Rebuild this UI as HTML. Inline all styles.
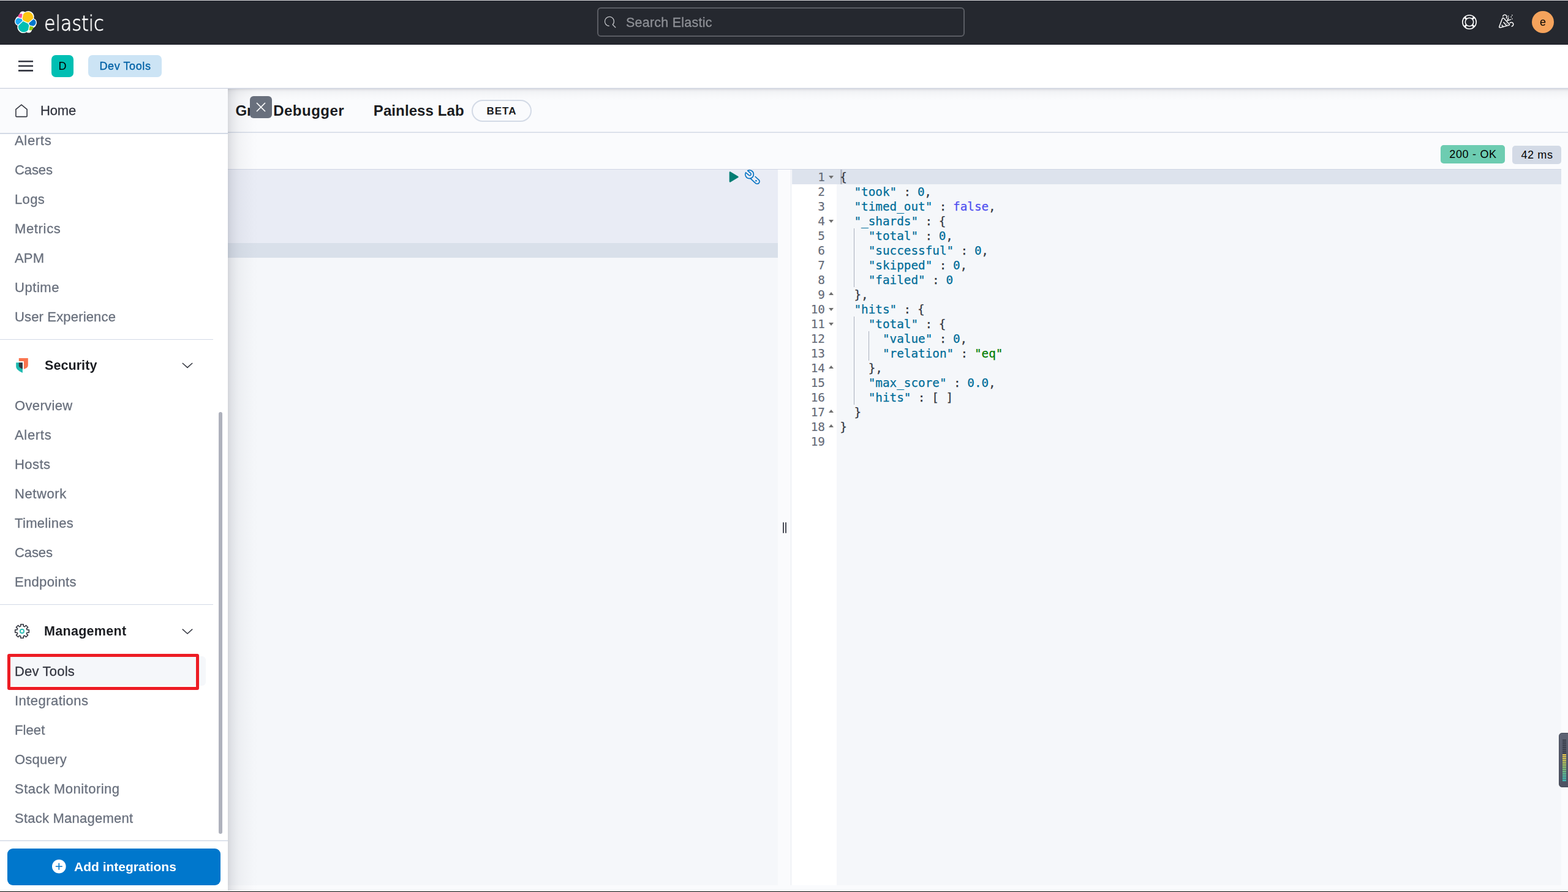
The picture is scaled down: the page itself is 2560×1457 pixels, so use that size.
<!DOCTYPE html>
<html lang="en">
<head>
<meta charset="utf-8">
<title>Dev Tools - Elastic</title>
<style>
*{box-sizing:border-box;margin:0;padding:0}
html,body{width:2560px;height:1457px;overflow:hidden;background:#fafbfd}
body{font-family:"Liberation Sans",sans-serif;color:#343741;position:relative}
.abs{position:absolute}
/* top header */
#topline{left:0;top:0;width:2560px;height:2px;background:linear-gradient(#e0e0e0 50%,#1c1f29 50%)}
#hdr{left:0;top:1px;width:2560px;height:72px;background:#25282f;border-bottom:1px solid #171a24}
#wordmark{left:72px;top:15px;font-family:"DejaVu Sans Light","DejaVu Sans",sans-serif;font-weight:200;font-size:33.3px;line-height:48px;color:#fff;-webkit-text-stroke:.8px #fff;transform-origin:0 50%;transform:scaleX(.903);white-space:nowrap}
#search{left:975px;top:12px;width:600px;height:48px;border:2px solid #5a5c63;border-radius:6px}
#search span{position:absolute;left:45px;top:1px;line-height:44px;font-size:21.5px;color:#8e9096;white-space:nowrap;letter-spacing:.23px;-webkit-text-stroke-width:.3px}
#avatar{left:2501px;top:18px;width:36px;height:36px;border-radius:50%;background:#f5a35c;color:#000;font-size:18px;line-height:36px;text-align:center}
/* second header */
#hdr2{left:0;top:72px;width:2560px;height:72px;background:#fff}
#hdr2b{left:0;top:143px;width:2560px;height:2px;background:linear-gradient(#eef0f5 50%,#cdd2df 50%)}
#hdrshadow{left:372px;top:145px;width:2188px;height:20px;background:linear-gradient(180deg,rgba(60,64,80,.168) 0,rgba(60,64,80,.126) 1.5px,rgba(60,64,80,.09) 2.5px,rgba(60,64,80,.068) 3.5px,rgba(60,64,80,.053) 4.5px,rgba(60,64,80,.042) 5.5px,rgba(60,64,80,.03) 8px,rgba(60,64,80,.015) 12px,rgba(60,64,80,0) 20px)}
#space{left:84px;top:90px;width:36px;height:36px;border-radius:7px;background:#00bfb3;color:#000;font-size:18px;line-height:36px;text-align:center}
#crumb{left:144px;top:90px;width:120px;height:36px;border-radius:7px;background:#cce4f5;color:#0061a6;font-size:18px;line-height:36px;text-align:center;white-space:nowrap;letter-spacing:.6px;padding-left:1px;-webkit-text-stroke-width:.35px}

/* nav */
#nav{left:0;top:145px;width:372px;height:1312px;background:#fff}
#navshadow{left:372px;top:145px;width:56px;height:1312px;background:linear-gradient(90deg,rgba(60,64,80,.19) 0,rgba(60,64,80,.157) 2px,rgba(60,64,80,.113) 6px,rgba(60,64,80,.076) 12.5px,rgba(60,64,80,.049) 18px,rgba(60,64,80,.027) 28px,rgba(60,64,80,.005) 43px,rgba(60,64,80,0) 52px)}
#navhome{left:0;top:145px;width:372px;height:72px;background:#fafbfd}
#navhomeb{left:0;top:217px;width:372px;height:2px;background:#d3dae6}
.ni{position:absolute;left:24px;font-size:22px;line-height:24px;height:24px;color:#69707d;white-space:nowrap;-webkit-text-stroke-width:.3px}
.nh{position:absolute;left:72px;font-size:21.5px;line-height:24px;height:24px;color:#1a1c21;font-weight:700;white-space:nowrap}
.ni,.nh,#addbtn span,#crumb,#space,#avatar,#search span,#wordmark{will-change:transform}
.nd{position:absolute;left:0;width:348px;height:1px;background:#d3dae6}
#home{left:66px;top:169px;color:#343741;letter-spacing:-.15px}
#sel{left:12px;top:1072px;width:324px;height:48px;border-radius:6px;background:#f5f7fa}
#redbox{left:12px;top:1068px;width:313px;height:59px;border:5px solid #ed1c24;border-radius:3px}
#thumb{left:357px;top:673px;width:6px;height:689px;border-radius:3px;background:#aeb1bc}
#navfootb{left:0;top:1372px;width:372px;height:2px;background:linear-gradient(#e9ecf2 50%,#d3dae6 50%)}
#addbtn{left:12px;top:1386px;width:348px;height:60px;border-radius:9px;background:#0077cc;color:#fff;font-size:21px;font-weight:700;line-height:60px;white-space:nowrap}
#addbtn span{position:absolute;left:109px;top:0}
#bottomline{left:0;top:1455px;width:2560px;height:2px;background:linear-gradient(#fff 50%,#000 50%)}

/* main */
#main{left:372px;top:145px;width:2188px;height:1312px;background:#fafbfd}
#tabsb{left:372px;top:215px;width:2188px;height:2px;background:linear-gradient(#e6eaf1 50%,#d3dae6 50%)}
#toolb{left:372px;top:275px;width:2177px;height:2px;background:linear-gradient(#fdfdfe 50%,#d0d6e4 50%)}
.tab{position:absolute;top:167px;font-size:24px;line-height:28px;font-weight:700;color:#1a1c21;white-space:nowrap}
#beta{left:770px;top:163px;width:98px;height:36px;border:2px solid #d3dae6;border-radius:18px;font-size:17px;font-weight:700;line-height:34px;text-align:center;color:#1a1c21;letter-spacing:1px;background:#fafbfd}
#closeb{left:408px;top:157px;width:36px;height:36px;border-radius:6px;background:#69707d}
#b200{left:2352px;top:237px;width:105px;height:30px;border-radius:5px;background:#6dccb1;color:#000;font-size:18px;line-height:30px;text-align:center;white-space:nowrap;letter-spacing:.7px;padding-left:1px}
#b42{left:2469px;top:238px;width:80px;height:30px;border-radius:5px;background:#d3dae6;color:#000;font-size:18px;line-height:30px;text-align:center;white-space:nowrap;letter-spacing:.6px;padding-left:1px}
#led{left:372px;top:277px;width:898px;height:1169px;background:#f5f7fa}
#lreq{left:372px;top:277px;width:898px;height:120px;background:#e9ecf5}
#lact{left:372px;top:397px;width:898px;height:24px;background:#d9e0ea}
#rsz{left:1270px;top:277px;width:21px;height:1169px;background:#fafbfd}
#rszb{left:1291px;top:277px;width:1px;height:1169px;background:#e6e9f0}
#gut{left:1292px;top:277px;width:74px;height:1169px;background:#fff}
#red{left:1366px;top:277px;width:1183px;height:1169px;background:#f5f7fa}
#ract{left:1293px;top:277px;width:1256px;height:24px;background:#dde3ed}
#cursor{left:1372px;top:277px;width:3px;height:24px;background:#b3b8c5}
.hb{position:absolute;top:853px;width:2px;height:18px;background:#4a4d58;border-radius:1px}
pre{font-family:"DejaVu Sans Mono","Liberation Mono",monospace;font-size:19.32px;line-height:24px}
#lnum{left:1292px;top:278px;width:55px;text-align:right;color:#646a77;-webkit-text-stroke-width:.15px}
#code{left:1371.2px;top:278px;color:#343741;-webkit-text-stroke-width:.25px}
#code .k{color:#006d99}
#code .n{color:#006d99}
#code .b{color:#4f4ff0}
#code .c1{letter-spacing:-.3px}
#code .c2{letter-spacing:-.9px}
#code .cm{margin-left:-.25px}
#code .s{color:#017d00}
.fo,.fc{position:absolute;left:1353px;width:0;height:0;border-left:4.5px solid transparent;border-right:4.5px solid transparent}
.fo{border-top:5px solid #707070}
.fc{border-bottom:5px solid #707070}
.ig{position:absolute;width:1px;background:#aab0bd}
</style>
</head>
<body>
<div class="abs" id="main"></div>
<div class="abs" id="tabsb"></div>
<div class="tab" id="tab1" style="left:384.5px"><span style="letter-spacing:-.2px">Grok </span><span style="letter-spacing:.5px">Debugger</span></div>
<div class="tab" id="tab2" style="left:609.8px;letter-spacing:.1px">Painless Lab</div>
<div class="abs" id="beta">BETA</div>
<div class="abs" id="closeb"><svg width="36" height="36" viewBox="0 0 36 36"><path d="M11 11 L25 25 M25 11 L11 25" stroke="#fff" stroke-width="1.7" fill="none"/></svg></div>
<div class="abs" id="toolb"></div>
<div class="abs" id="b200">200 - OK</div>
<div class="abs" id="b42">42 ms</div>
<div class="abs" id="led"></div><div class="abs" id="lreq"></div><div class="abs" id="lact"></div>
<div class="abs" id="rsz"></div><div class="abs" id="rszb"></div>
<div class="hb" style="left:1278px"></div><div class="hb" style="left:1282px"></div>
<div class="abs" id="gut"></div><div class="abs" id="red"></div><div class="abs" id="ract"></div>
<div class="abs" id="cursor"></div>
<pre class="abs" id="lnum">1
2
3
4
5
6
7
8
9
10
11
12
13
14
15
16
17
18
19</pre>
<div class="fo" style="top:287px"></div><div class="fo" style="top:359px"></div><div class="fo" style="top:503px"></div><div class="fo" style="top:527px"></div><div class="fc" style="top:477px"></div><div class="fc" style="top:597px"></div><div class="fc" style="top:669px"></div><div class="fc" style="top:693px"></div>
<div class="ig" style="left:1394px;top:373px;height:96px"></div><div class="ig" style="left:1394px;top:517px;height:144px"></div><div class="ig" style="left:1418px;top:541px;height:48px"></div>
<pre class="abs" id="code">{
  <span class="k">"took"</span><span class="c1"> </span>:<span class="c2"> </span><span class="n">0</span><span class="cm">,</span>
  <span class="k">"timed_out"</span><span class="c1"> </span>:<span class="c2"> </span><span class="b">false</span><span class="cm">,</span>
  <span class="k">"_shards"</span><span class="c1"> </span>:<span class="c2"> </span>{
    <span class="k">"total"</span><span class="c1"> </span>:<span class="c2"> </span><span class="n">0</span><span class="cm">,</span>
    <span class="k">"successful"</span><span class="c1"> </span>:<span class="c2"> </span><span class="n">0</span><span class="cm">,</span>
    <span class="k">"skipped"</span><span class="c1"> </span>:<span class="c2"> </span><span class="n">0</span><span class="cm">,</span>
    <span class="k">"failed"</span><span class="c1"> </span>:<span class="c2"> </span><span class="n">0</span>
  },
  <span class="k">"hits"</span><span class="c1"> </span>:<span class="c2"> </span>{
    <span class="k">"total"</span><span class="c1"> </span>:<span class="c2"> </span>{
      <span class="k">"value"</span><span class="c1"> </span>:<span class="c2"> </span><span class="n">0</span><span class="cm">,</span>
      <span class="k">"relation"</span><span class="c1"> </span>:<span class="c2"> </span><span class="s">"eq"</span>
    },
    <span class="k">"max_score"</span><span class="c1"> </span>:<span class="c2"> </span><span class="n">0.0</span><span class="cm">,</span>
    <span class="k">"hits"</span><span class="c1"> </span>:<span class="c2"> </span>[ ]
  }
}
</pre>

<div class="abs" id="hdrshadow"></div>
<div class="abs" id="navshadow"></div>
<div class="abs" id="nav"></div>
<div class="abs" id="navhome"></div><div class="abs" id="navhomeb"></div>
<div class="ni" id="home">Home</div>
<div class="ni" id="n0" style="top:218px;letter-spacing:0.68px">Alerts</div>
<div class="ni" id="n1" style="top:266px;letter-spacing:-0.12px">Cases</div>
<div class="ni" id="n2" style="top:314px;letter-spacing:0.37px">Logs</div>
<div class="ni" id="n3" style="top:362px;letter-spacing:0.65px">Metrics</div>
<div class="ni" id="n4" style="top:410px;letter-spacing:0.20px">APM</div>
<div class="ni" id="n5" style="top:458px;letter-spacing:0.56px">Uptime</div>
<div class="ni" id="n6" style="top:506px;letter-spacing:0.16px">User Experience</div>
<div class="ni" id="n7" style="top:651px;letter-spacing:0.36px">Overview</div>
<div class="ni" id="n8" style="top:699px;letter-spacing:0.68px">Alerts</div>
<div class="ni" id="n9" style="top:747px;letter-spacing:0.43px">Hosts</div>
<div class="ni" id="n10" style="top:795px;letter-spacing:0.58px">Network</div>
<div class="ni" id="n11" style="top:843px;letter-spacing:0.31px">Timelines</div>
<div class="ni" id="n12" style="top:891px;letter-spacing:-0.12px">Cases</div>
<div class="ni" id="n13" style="top:939px;letter-spacing:0.32px">Endpoints</div>
<div class="abs" id="sel"></div>
<div class="ni" id="n14" style="top:1085px;color:#343741;letter-spacing:0.19px">Dev Tools</div>
<div class="ni" id="n15" style="top:1133px;letter-spacing:0.45px">Integrations</div>
<div class="ni" id="n16" style="top:1181px;letter-spacing:0.10px">Fleet</div>
<div class="ni" id="n17" style="top:1229px;letter-spacing:0.25px">Osquery</div>
<div class="ni" id="n18" style="top:1277px;letter-spacing:0.48px">Stack Monitoring</div>
<div class="ni" id="n19" style="top:1325px;letter-spacing:0.23px">Stack Management</div>
<div class="nd" style="top:554px"></div><div class="nd" style="top:987px"></div>
<div class="nh" id="hsec" style="top:585px;left:72.5px;letter-spacing:.07px">Security</div>
<div class="nh" id="hman" style="top:1019px;left:71.5px;letter-spacing:.3px">Management</div>
<div class="abs" id="redbox"></div>
<div class="abs" id="thumb"></div>
<div class="abs" id="navfootb"></div>
<div class="abs" id="addbtn"><span>Add integrations</span></div>
<div class="abs" id="hdr2"></div>
<div class="abs" id="hdr2b"></div>
<div class="abs" id="hdr"></div>
<div class="abs" id="topline"></div>
<div class="abs" id="wordmark">elastic</div>
<div class="abs" id="search"><span>Search Elastic</span></div>
<div class="abs" id="avatar">e</div>
<div class="abs" id="space">D</div>
<div class="abs" id="crumb">Dev Tools</div>
<svg class="abs" id="logo" style="left:24px;top:18px" width="36" height="36" viewBox="0 0 32 32"><g fill="none" fill-rule="evenodd"><path fill="#FFF" d="M32 16.77a6.334 6.334 0 00-1.14-3.63 6.269 6.269 0 00-3.044-2.308 9.159 9.159 0 00-.168-5.165 9.068 9.068 0 00-3.127-4.098A8.951 8.951 0 0019.667.004a8.94 8.94 0 00-4.857 1.56A4.817 4.817 0 0011.763.5a4.82 4.82 0 00-3.057 1.04 4.897 4.897 0 00-1.71 2.771 4.927 4.927 0 00.392 3.238A6.362 6.362 0 001.164 11.5 6.427 6.427 0 000 15.148c-.002 1.305.394 2.58 1.135 3.65a6.297 6.297 0 003.05 2.314 9.16 9.16 0 00.156 5.16 9.073 9.073 0 003.12 4.098 8.956 8.956 0 004.848 1.766 8.942 8.942 0 004.858-1.545 4.814 4.814 0 003.041 1.052 4.817 4.817 0 003.051-1.04 4.894 4.894 0 001.708-2.765 4.925 4.925 0 00-.386-3.232 6.36 6.36 0 006.256-3.946A6.424 6.424 0 0032 16.77"/><path fill="#FEC514" d="M12.58 13.787l7.002 3.211 7.066-6.213a7.849 7.849 0 00.152-1.557c0-1.692-.539-3.34-1.54-4.704a7.897 7.897 0 00-4.02-2.869 7.87 7.87 0 00-4.932.086 7.9 7.9 0 00-3.92 3.007l-1.174 6.118 1.367 2.92-.001.001z"/><path fill="#00BFB3" d="M5.333 21.228a7.964 7.964 0 001.384 6.28 7.935 7.935 0 004.031 2.874 7.912 7.912 0 004.943-.1 7.937 7.937 0 003.923-3.03l1.166-6.102-1.555-2.985-7.03-3.211-6.862 6.274z"/><path fill="#F04E98" d="M5.288 9.067l4.8 1.137L11.14 4.74a3.785 3.785 0 00-4.538-.056 3.81 3.81 0 00-1.314 4.383"/><path fill="#1BA9F5" d="M4.872 10.214a5.294 5.294 0 00-2.595 1.882 5.324 5.324 0 00-.142 6.124 5.287 5.287 0 002.505 2l6.733-6.101-1.235-2.65-5.266-1.255z"/><path fill="#93C90E" d="M20.873 27.277a3.736 3.736 0 002.285.785 3.783 3.783 0 003.101-1.63 3.812 3.812 0 00.451-3.484l-4.8-1.125-1.037 5.454z"/><path fill="#07C" d="M21.848 20.563l5.28 1.238a5.34 5.34 0 002.622-1.938 5.37 5.37 0 001.013-3.106 5.311 5.311 0 00-.936-3.01 5.282 5.282 0 00-2.475-1.944l-6.904 6.07 1.4 2.69z"/></g></svg>
<svg class="abs" style="left:984px;top:24px" width="24" height="24" viewBox="0 0 24 24"><path d="M20.8 20.8 L16.25 16.25 A7.5 7.5 0 1 0 10.3 18.42" fill="none" stroke="#c0c2c6" stroke-width="1.3" stroke-linecap="round" stroke-linejoin="round"/></svg>
<svg class="abs" style="left:2385px;top:22px" width="28" height="28" viewBox="0 0 28 28"><g fill="none" stroke="#fff"><circle cx="14" cy="14" r="11.2" stroke-width="1.6"/><circle cx="14" cy="14" r="6.7" stroke-width="1.6"/><path d="M9.3 9.3 L6.1 6.1 M18.7 9.3 L21.9 6.1 M9.3 18.7 L6.1 21.9 M18.7 18.7 L21.9 21.9" stroke-width="2.9"/></g></svg>
<svg class="abs" style="left:2439px;top:16px" width="40" height="40" viewBox="0 0 40 40"><g fill="none" stroke="#fff" stroke-width="1.5" stroke-linecap="round" stroke-linejoin="round"><path d="M13.7 14.6 Q14.6 12.4 16.2 14 L25 23.2 Q26.4 24.8 24.2 25.4 L10.6 28.9 Q8 29.6 8.9 27.2 Z"/><path d="M15.9 20.5 L20.5 25.7 M13 25 L15.4 27.5"/><path d="M19.8 21.6 L23 25" stroke-width="1" opacity=".6"/><path d="M14.7 10.5 A3.3 3.3 0 1 1 20.3 13.7"/><path d="M26.2 21.4 A3.3 3.3 0 1 1 29.2 27"/><path d="M27.4 15.9 L21.9 17.8 L23.8 13"/></g><g fill="#fff"><circle cx="23.6" cy="10.3" r=".85"/><circle cx="29.8" cy="8.8" r=".85"/><circle cx="28.3" cy="11.7" r=".85"/><circle cx="29.8" cy="14.8" r=".85"/></g></svg>
<svg class="abs" style="left:28px;top:96px" width="28" height="24" viewBox="0 0 28 24"><path d="M2 4.2 H26 M2 11.8 H26 M2 19.4 H26" stroke="#343741" stroke-width="2.6"/></svg>
<svg class="abs" style="left:22px;top:168px" width="26" height="26" viewBox="0 0 26 26"><path d="M13 3.2 L22.1 10.6 V21.4 Q22.1 22.6 20.9 22.6 H5.1 Q3.9 22.6 3.9 21.4 V10.6 Z" fill="none" stroke="#343741" stroke-width="1.6" stroke-linejoin="round"/></svg>
<svg class="abs" style="left:16px;top:576px" width="40" height="40" viewBox="0 0 40 40"><path fill="#fa744e" d="M14.8 9.1 H29.8 V20.6 C29.8 24.4 26.4 26.2 22.9 26.9 V14 H14.8 Z"/><path fill="#1dbab0" d="M10.2 16.2 H20.9 V33 C15.2 30.4 10.2 27.6 10.2 22.6 Z"/><path fill="#343741" d="M14.8 16.2 H20.9 V26.8 C17.6 25.4 14.8 23.8 14.8 21 Z"/></svg>
<svg class="abs" style="left:16px;top:1011px" width="40" height="40" viewBox="0 0 40 40"><path d="M17.80 11.70 L17.80 8.70 L22.20 8.70 L22.20 11.70 A2.60 2.60 0 0 0 24.31 12.58 L26.43 10.45 L29.55 13.57 L27.42 15.69 A2.60 2.60 0 0 0 28.30 17.80 L31.30 17.80 L31.30 22.20 L28.30 22.20 A2.60 2.60 0 0 0 27.42 24.31 L29.55 26.43 L26.43 29.55 L24.31 27.42 A2.60 2.60 0 0 0 22.20 28.30 L22.20 31.30 L17.80 31.30 L17.80 28.30 A2.60 2.60 0 0 0 15.69 27.42 L13.57 29.55 L10.45 26.43 L12.58 24.31 A2.60 2.60 0 0 0 11.70 22.20 L8.70 22.20 L8.70 17.80 L11.70 17.80 A2.60 2.60 0 0 0 12.58 15.69 L10.45 13.57 L13.57 10.45 L15.69 12.58 A2.60 2.60 0 0 0 17.80 11.70 Z" fill="none" stroke="#343741" stroke-width="1.6" stroke-linejoin="round"/><circle cx="20" cy="20" r="3.1" fill="none" stroke="#1dbab0" stroke-width="1.7"/></svg>
<svg class="abs" style="left:294px;top:586px" width="24" height="20" viewBox="0 0 24 20"><path d="M3.8 7 L12 14.4 L20.2 7" fill="none" stroke="#343741" stroke-width="1.5"/></svg>
<svg class="abs" style="left:294px;top:1020px" width="24" height="20" viewBox="0 0 24 20"><path d="M3.8 7.6 L12 15 L20.2 7.6" fill="none" stroke="#343741" stroke-width="1.5"/></svg>
<svg class="abs" style="left:84px;top:1403px" width="25" height="25" viewBox="0 0 25 25"><circle cx="12.3" cy="12.3" r="11.3" fill="#fff"/><path d="M12.3 6.8 V17.8 M6.8 12.3 H17.8" stroke="#0077cc" stroke-width="1.6"/></svg>
<svg class="abs" style="left:1186px;top:276px" width="24" height="26" viewBox="0 0 24 26"><path d="M6 5.6 L18.4 13 L6 20.4 Z" fill="#017d73" stroke="#017d73" stroke-width="2.6" stroke-linejoin="round"/></svg>
<svg class="abs" style="left:1212px;top:273px" width="32" height="32" viewBox="0 0 32 32"><g fill="none" stroke="#0071c2" stroke-width="1.6" stroke-linecap="round" stroke-linejoin="round"><path d="M8.6 5.7 A6.8 6.8 0 1 1 5.5 8.75 L10.6 13.2 A2.2 2.2 0 0 0 13.2 9.6 Z"/><path d="M13.6 18.8 L21.1 25.8 A3.85 3.85 0 0 0 27.2 21.1 L21.1 15.5"/><circle cx="22.4" cy="22.3" r="1.25" fill="#0071c2" stroke="none"/></g></svg>
<div class="abs" id="widget" style="left:2545px;top:1197px;width:20px;height:89px;border-radius:5px;background:linear-gradient(180deg,#5d6373,#4d5262);border:1px solid #464b59"><div style="position:absolute;left:5px;top:10px;width:6px;height:2px;background:#3a3f4b"></div><div style="position:absolute;left:5px;top:13px;width:6px;height:2px;background:#3a3f4b"></div><div style="position:absolute;left:5px;top:16px;width:6px;height:2px;background:#3a3f4b"></div><div style="position:absolute;left:5px;top:19px;width:6px;height:2px;background:#3a3f4b"></div><div style="position:absolute;left:5px;top:22px;width:6px;height:2px;background:#3a3f4b"></div><div style="position:absolute;left:5px;top:25px;width:6px;height:2px;background:#3a3f4b"></div><div style="position:absolute;left:5px;top:28px;width:6px;height:2px;background:#3a3f4b"></div><div style="position:absolute;left:5px;top:31px;width:6px;height:2px;background:#3a3f4b"></div><div style="position:absolute;left:5px;top:34px;width:6px;height:2px;background:#e8c74a"></div><div style="position:absolute;left:5px;top:37px;width:6px;height:2px;background:#e3c94b"></div><div style="position:absolute;left:5px;top:40px;width:6px;height:2px;background:#d9cb4e"></div><div style="position:absolute;left:5px;top:43px;width:6px;height:2px;background:#cfcc52"></div><div style="position:absolute;left:5px;top:46px;width:6px;height:2px;background:#c0cd57"></div><div style="position:absolute;left:5px;top:49px;width:6px;height:2px;background:#b0cd5d"></div><div style="position:absolute;left:5px;top:52px;width:6px;height:2px;background:#9fcc66"></div><div style="position:absolute;left:5px;top:55px;width:6px;height:2px;background:#8ecb70"></div><div style="position:absolute;left:5px;top:58px;width:6px;height:2px;background:#7eca7b"></div><div style="position:absolute;left:5px;top:61px;width:6px;height:2px;background:#70c987"></div><div style="position:absolute;left:5px;top:64px;width:6px;height:2px;background:#63c794"></div><div style="position:absolute;left:5px;top:67px;width:6px;height:2px;background:#57c6a0"></div><div style="position:absolute;left:5px;top:70px;width:6px;height:2px;background:#4dc4aa"></div><div style="position:absolute;left:5px;top:73px;width:6px;height:2px;background:#45c3b2"></div><div style="position:absolute;left:5px;top:76px;width:6px;height:2px;background:#40c2b8"></div></div>
<div class="abs" id="bottomline"></div>
</body>
</html>
